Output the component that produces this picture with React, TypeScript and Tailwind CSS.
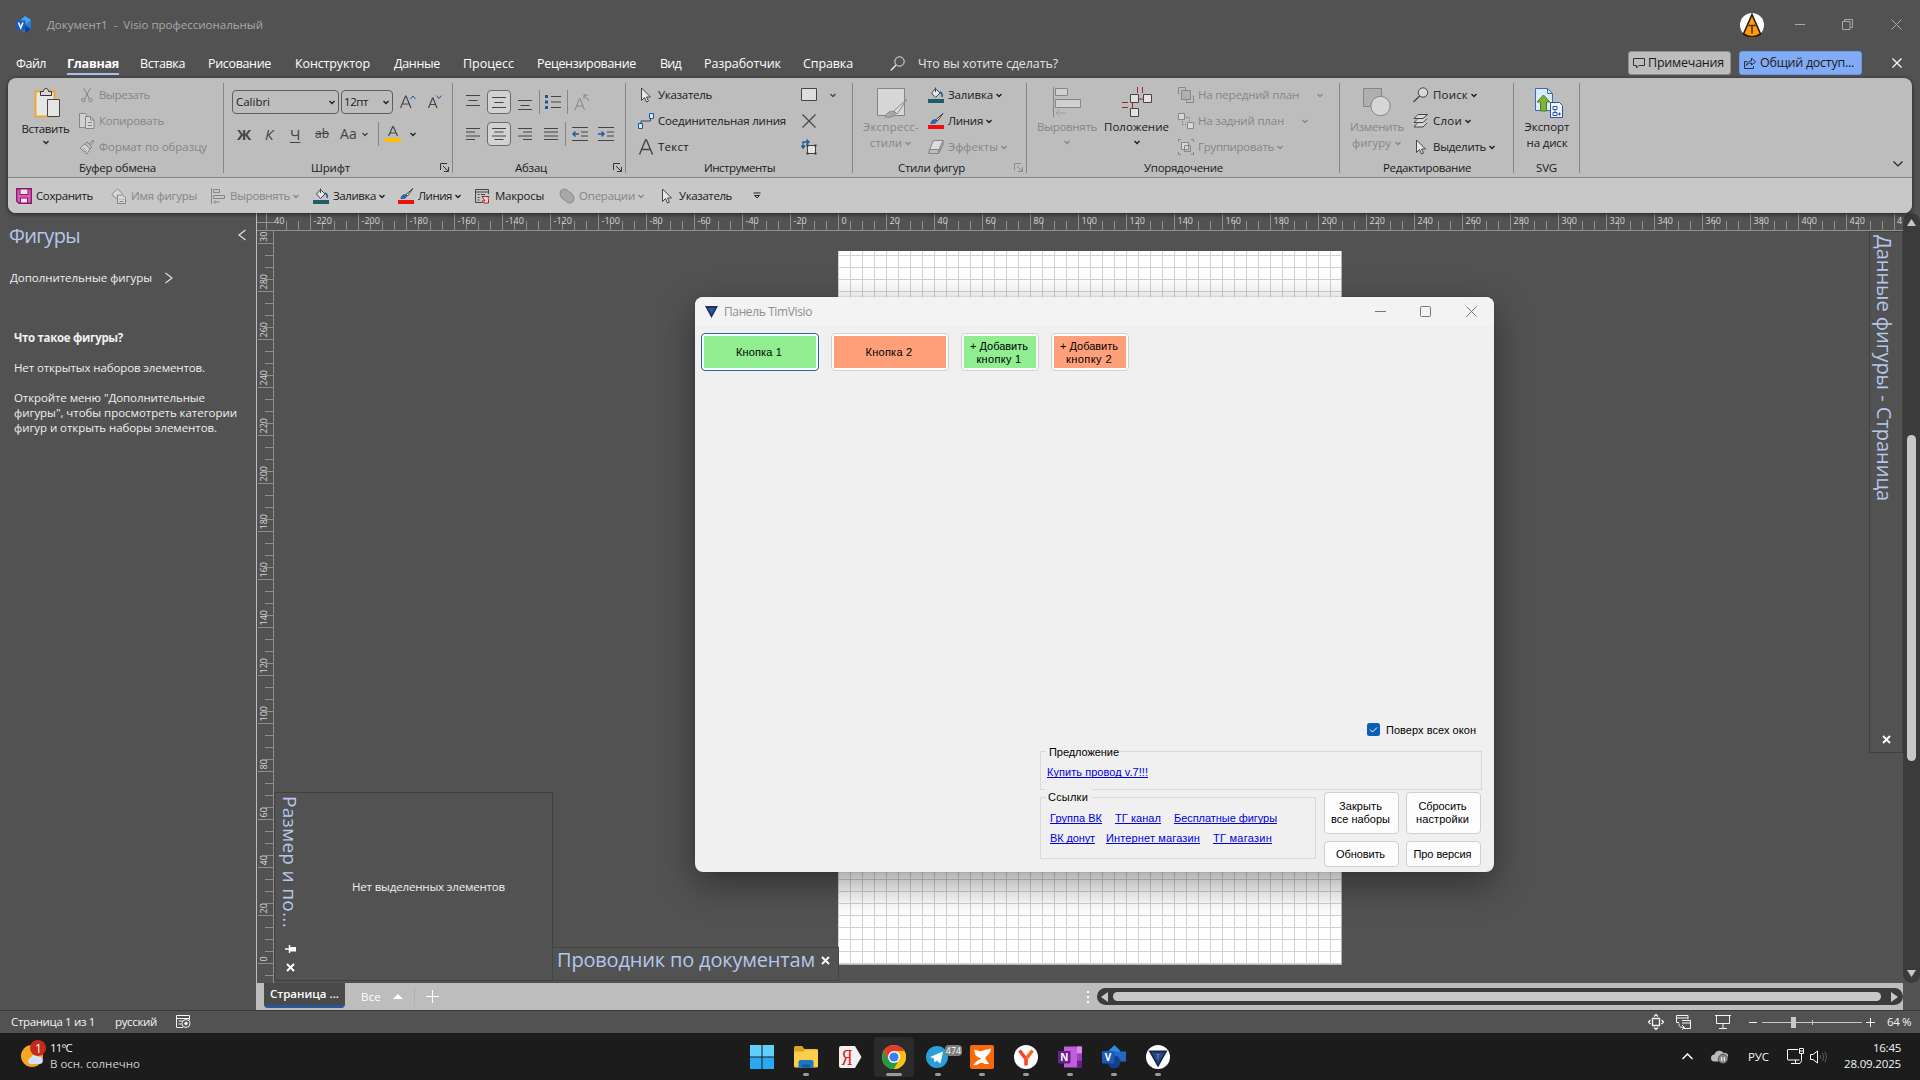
import { useLayoutEffect, useRef, useState } from "react";
import type { ReactNode } from "react";
import clsx from "clsx";

type FitProps = { children: string; w: number; vertical?: boolean; underline?: boolean; className?: string };

// Text run whose tracking is adjusted so it takes exactly `w` pixels
function Fit({ children, w, vertical, underline, className }: FitProps) {
  const ref = useRef<HTMLSpanElement>(null);
  const [tracking, setTracking] = useState(0);

  useLayoutEffect(() => {
    const el = ref.current;
    if (!el) return;
    const box = el.getBoundingClientRect();
    const natural = vertical ? box.height : box.width;
    setTracking((w - natural) / children.length);
  }, [children, w, vertical]);

  return (
    <span
      className={clsx("block shrink-0", className)}
      style={vertical ? { height: w } : { width: w }}
    >
      <span
        ref={ref}
        className={clsx(
          "inline-block whitespace-pre",
          vertical && "[writing-mode:vertical-rl]",
          underline && "underline underline-offset-1 [text-decoration-skip-ink:none]"
        )}
        style={{ letterSpacing: tracking }}
      >
        {children}
      </span>
    </span>
  );
}

function Chevron({ className }: { className?: string }) {
  return (
    <svg width="8" height="8" viewBox="0 0 8 8" className={clsx("shrink-0", className)}>
      <path d="M1.500 3 4 5.500 6.500 3" fill="none" stroke="currentColor" strokeWidth="1.300" />
    </svg>
  );
}

function Svg({ size = 16, children, className }: { size?: number; children: ReactNode; className?: string }) {
  return (
    <svg width={size} height={size} viewBox={`0 0 ${size} ${size}`} fill="none" stroke="currentColor" className={clsx("shrink-0", className)}>
      {children}
    </svg>
  );
}

/* ---------- small icons ---------- */

const CutIcon = () => (
  <Svg>
    <path d="M4.500 1 10.500 12M11.500 1 5.500 12" />
    <circle cx="4.500" cy="13" r="1.700" />
    <circle cx="11.500" cy="13" r="1.700" />
  </Svg>
);
const CopyIcon = () => (
  <Svg>
    <path d="M6.500 14.500H.5V.5h6l1 1v2" fill="#d0d0d0" />
    <path d="M6.500 3.500h5l3.500 3.500v8.500h-8.500z" fill="#d4d4d4" />
    <path d="M11.500 3.500v3.500H15M9 9.500h4M9 12.500h4" />
  </Svg>
);
const PainterIcon = () => (
  <Svg>
    <path d="m1 9 5-4 5 5-3 5z" fill="#d4d4d4" />
    <path d="m6 5 2-2 5 5-2 2M10 5l4-4 1 1-3.500 4.500M4 11l2-2M6 13l2-2" />
  </Svg>
);
const PointerIcon = () => (
  <Svg>
    <path d="M3.500 1v12.500l3-3 2 4.500 2-1-2-4h4z" fill="#e8e8e8" stroke="#444" />
  </Svg>
);
const ConnectorIcon = () => (
  <Svg>
    <path d="M3 10.500V8h9.500V5" stroke="#444" />
    <path d="M.5 10.500h4v5h-4zM11.500.500h4v5h-4z" fill="#d8e6f4" stroke="#1b5a96" />
  </Svg>
);
const TextIcon = () => (
  <Svg>
    <path d="M1.500 15.500 7.500 1h1l6 14.500M3.700 10.500h8.600" stroke="#444" strokeWidth="1.400" />
  </Svg>
);
const BucketIcon = ({ color = "#1f5e68" }: { color?: string }) => (
  <Svg>
    <path d="m3.500 6 4-4.500L12 6 7.500 10.500z" fill="#e6e6e6" stroke="#444" />
    <path d="M7.500 5V.5" stroke="#444" />
    <path d="M12 5c2 1 2.500 3 2 5" stroke="#1b5a96" strokeWidth="1.500" />
    <path d="M0 12h16v4H0z" fill={color} stroke="none" />
  </Svg>
);
const LineIcon = () => (
  <Svg>
    <path d="M15 .5 8 6.500l1.500 1.500z" fill="#e6e6e6" stroke="#444" />
    <path d="M3 10.500c0-3 3-4.500 5.500-3.500 1 2-1.500 4-5.500 3.500z" fill="#2a6cb0" stroke="#1b5a96" />
    <path d="M0 12h16v4H0z" fill="#ee0e0e" stroke="none" />
  </Svg>
);
const EffectsIcon = () => (
  <Svg>
    <path d="M5.500 1.500h9.500l-4 9H1.500z" fill="#dcdcdc" />
    <path d="M1.500 10.500 1 14.500h9.500L15 5.500v-4M11 10.500l-.5 4" strokeWidth="1.200" />
  </Svg>
);
const FrontIcon = () => (
  <Svg>
    <path d="M.5 7.500V.5h7v3M15.500 8.500v7h-7v-2" />
    <path d="M3.500 3.500h9v9h-9z" fill="#b0b0b0" />
  </Svg>
);
const BackIcon = () => (
  <Svg>
    <path d="M.5.5h6v6h-6zM9.500 9.500h6v6h-6z" fill="#d8d8d8" />
    <path d="M8 4.500h3.500V8M4.500 8v3.500H8" strokeDasharray="2 1" />
  </Svg>
);
const GroupIcon = () => (
  <Svg>
    <path d="M3.500 3.500h7v7h-7z" fill="#d8d8d8" />
    <path d="M6.500 6.500h6v6h-6zM.5 3V.5H3M13 .5h2.500V3M.5 13v2.500H3M13 15.500h2.500V13" />
  </Svg>
);
const FindIcon = () => (
  <Svg>
    <circle cx="10" cy="5.500" r="4.700" fill="#d8d8d8" stroke="#444" />
    <path d="m6.500 9-6 6" stroke="#444" strokeWidth="1.300" />
  </Svg>
);
const LayersIcon = () => (
  <Svg>
    <path d="M5 1.500h9.500L10 5.500H1zM4 6.500l-3 3h9l4-4M4 10.500l-3 3.500h9l4-4" fill="#d8d8d8" stroke="#444" />
  </Svg>
);
const AlignIcon = () => (
  <Svg>
    <path d="M1.500 0v16M3.500 1.500h6v3h-6zM3.500 7.500h11v3h-11zM3.500 14h6M5.500 12.500 4 14l1.500 1.500" />
  </Svg>
);
const SaveIcon = () => (
  <Svg>
    <path d="M.7.7h14.600v14.600H3L.7 13z" fill="#d65bb4" stroke="#8c1a6a" strokeWidth="1.400" />
    <path d="M4 1h8v5.500H4zM4.500 10h7v5h-7z" fill="#f2e4ee" stroke="#8c1a6a" />
  </Svg>
);
const ShapeNameIcon = () => (
  <Svg>
    <path d="M6 11 .8 6.500 6.500.8l5 5" fill="#d8d8d8" />
    <path d="M6.500 7h5l3 2.500v6h-8z" fill="#d8d8d8" />
    <path d="M8.500 11.500h1M11.500 11.500h1M8.500 13.500h4" />
  </Svg>
);
const MacroIcon = () => (
  <Svg>
    <path d="M13.500 6V1.500H.5v13h7M.5 4h13" stroke="#444" />
    <path d="M2.500 6.500h2M6 6.500h4M2.500 9.500h2M2.500 12h2" stroke="#444" />
    <path d="M7 8.500h7c-1 1-1 2-.5 3v3.500h-5l-1.500-2h3z" fill="#f2d8d8" stroke="#a3262e" />
  </Svg>
);
const OperationsIcon = () => (
  <Svg>
    <path d="M1 5.500a4.500 4.500 0 0 1 8.500-2c2 .5 5.500 3.500 5.500 7a4.500 4.500 0 0 1-8.500 2C4 11.500 1 9 1 5.500z" fill="#a8a8a8" />
  </Svg>
);

/* ---------- ribbon parts ---------- */

type ItemProps = { icon: ReactNode; label: string; w: number; off?: boolean; menu?: boolean; menuGap?: string; className?: string };

function Item({ icon, label, w, off, menu, menuGap = "ml-[2px]", className }: ItemProps) {
  return (
    <div className={clsx("flex h-[26px] items-center", off ? "text-[#868686]" : "text-[#1a1a1a]", className)}>
      {icon}
      <Fit w={w} className="ml-1">{label}</Fit>
      {menu && <Chevron className={menuGap} />}
    </div>
  );
}

function Launcher({ off }: { off?: boolean }) {
  return (
    <svg width="9" height="9" viewBox="0 0 9 9" fill="none" stroke={off ? "#8a8a8a" : "#333"} className="absolute right-[4px] bottom-[5px]">
      <path d="M.5 7V.5H7M3 3l5 5M8.500 4v4.500H4" />
    </svg>
  );
}

type GroupProps = { width: string; label: string; w: number; labelLeft: string; launcher?: "on" | "off"; children: ReactNode };

function Group({ width, label, w, labelLeft, launcher, children }: GroupProps) {
  return (
    <div className={clsx("relative flex h-[99px] shrink-0 flex-col pt-1", width)}>
      <div className="flex h-[77px]">{children}</div>
      <div className={clsx("flex h-[18px] items-center text-[#1a1a1a]", labelLeft)}>
        <Fit w={w}>{label}</Fit>
      </div>
      {launcher && <Launcher off={launcher === "off"} />}
      <span className="absolute top-[5px] right-0 h-[90px] w-px bg-[#868686]" />
    </div>
  );
}

function Lines({ d, active }: { d: string; active?: boolean }) {
  return (
    <span className={clsx("flex h-6 w-6 shrink-0 items-center justify-center rounded", active && "border border-[#6b6b6b] bg-[#d2d2d2]")}>
      <Svg className="text-[#444]">
        <path d={d} />
      </Svg>
    </span>
  );
}

const VSep = ({ className }: { className?: string }) => <span className={clsx("h-6 w-px shrink-0 bg-[#868686]", className)} />;

function ClipboardGroup() {
  return (
    <Group width="w-[216px]" label="Буфер обмена" w={77} labelLeft="pl-[71px]">
      <div className="flex w-[62px] shrink-0 flex-col items-center pl-[13px] pt-[5px]">
        <Svg size={32} className="ml-[4px]">
          <path d="M3.500 4.500h19v25h-19z" fill="#e6e6e6" stroke="#f0a92b" strokeWidth="2" />
          <path d="M8.500 8.500V4.500h3c0-4 5-4 5 0h3v4z" fill="#d8d8d8" stroke="#333" />
          <path d="M15.500 12.500h12v17h-12z" fill="#e4e4e4" stroke="#444" />
        </Svg>
        <Fit w={48} className="mt-px text-[#1a1a1a]">Вставить</Fit>
        <Chevron className="mt-px text-[#222]" />
      </div>
      <div className="ml-[9px]">
        <Item icon={<CutIcon />} label="Вырезать" w={51} off />
        <Item icon={<CopyIcon />} label="Копировать" w={65} off />
        <Item icon={<PainterIcon />} label="Формат по образцу" w={108} off />
      </div>
    </Group>
  );
}

function FontGroup() {
  return (
    <Group width="w-[229px]" label="Шрифт" w={39} labelLeft="pl-[87px]" launcher="on">
      <div className="pl-2 pt-2 text-[#444]">
        <div className="flex items-center">
          <div className="flex h-6 w-[107px] items-center rounded border border-[#5e5e5e] pr-[2px] pl-[3px] text-[#1a1a1a]">
            <Fit w={34} className="mr-auto">Calibri</Fit>
            <Chevron />
          </div>
          <div className="ml-[2px] flex h-6 w-[52px] items-center rounded border border-[#5e5e5e] pr-[2px] pl-[2px] text-[#1a1a1a]">
            <Fit w={24} className="mr-auto">12пт</Fit>
            <Chevron />
          </div>
          <Svg className="ml-[7px]">
            <path d="M.5 14 5.500 2h.5l5 12M2.200 10h7.500" strokeWidth="1.200" />
            <path d="m10.500 5 2.500-3 2.500 3" stroke="#1b5a96" />
          </Svg>
          <Svg className="ml-[11px]">
            <path d="m1.500 14 4-10h.5l4 10M3 10.500h6" strokeWidth="1.200" />
            <path d="m9.500 1.500 2.500 3 2.500-3" stroke="#1b5a96" />
          </Svg>
        </div>
        <div className="mt-[8px] flex h-6 items-center text-[15px] leading-none">
          <span className="ml-[5px] w-[28px] font-bold">Ж</span>
          <span className="w-[25px] italic">К</span>
          <span className="w-[25px] underline underline-offset-2">Ч</span>
          <span className="w-[25px] text-[12px] line-through">ab</span>
          <Fit w={17} className="text-[14px]">Aa</Fit>
          <Chevron className="ml-[4px]" />
          <VSep className="ml-[9px]" />
          <Svg className="ml-[6px]">
            <path d="m3.500 10 4.300-9.500h.4l4.300 9.500M5 7h6" strokeWidth="1.200" />
            <path d="M0 12h16v4H0z" fill="#ffc000" stroke="none" />
          </Svg>
          <Chevron className="ml-2 text-[#222]" />
        </div>
      </div>
    </Group>
  );
}

function ParagraphGroup() {
  return (
    <Group width="w-[173px]" label="Абзац" w={32} labelLeft="pl-[62px]" launcher="on">
      <div className="pl-2 pt-2">
        <div className="flex items-center gap-[2px]">
          <Lines d="M1 1.500h14M3.500 6.500h9M1 11.500h14" />
          <Lines active d="M1 3.500h14M3.500 8.500h9M1 13.500h14" />
          <Lines d="M1 6.500h14M3.500 11.500h9M1 15.500h14" />
          <VSep />
          <Svg className="ml-[3px] text-[#444]">
            <path d="M6 2.500h10M6 8h10M6 13.500h10" />
            <path d="M0 1h3v3H0zM0 6.500h3v3H0zM0 12h3v3H0z" fill="#1b5a96" stroke="none" />
          </Svg>
          <VSep className="ml-[4px]" />
          <Svg className="ml-[4px] text-[#868686]">
            <path d="m1 16 4.500-11.500H6L10.500 16M2.500 12h6.500M15 7 10 1M10 5V1h4" />
          </Svg>
        </div>
        <div className="mt-[8px] flex items-center gap-[2px]">
          <Lines d="M1 2.500h14M1 6h9M1 10h14M1 13.500h9" />
          <Lines active d="M1 2.500h14M3.500 6h9M1 10h14M3.500 13.500h9" />
          <Lines d="M1 2.500h14M6 6h9M1 10h14M6 13.500h9" />
          <Lines d="M1 2.500h14M1 6h14M1 10h14M1 13.500h14" />
          <VSep />
          <Svg className="ml-[4px] text-[#444]">
            <path d="M0 1.500h16M9 6h7M9 10h7M0 14.500h16" />
            <path d="M7 8H1M3.500 5.500 1 8l2.500 2.500" stroke="#1b5a96" strokeWidth="1.400" />
          </Svg>
          <Svg className="ml-[8px] text-[#444]">
            <path d="M0 1.500h16M9 6h7M9 10h7M0 14.500h16" />
            <path d="M0 8h6M3.500 5.500 6 8l-2.500 2.500" stroke="#1b5a96" strokeWidth="1.400" />
          </Svg>
        </div>
      </div>
    </Group>
  );
}

function ToolsGroup() {
  return (
    <Group width="w-[227px]" label="Инструменты" w={71} labelLeft="pl-[78px]">
      <div className="w-[164px] pl-[12px]">
        <Item icon={<PointerIcon />} label="Указатель" w={54} />
        <Item icon={<ConnectorIcon />} label="Соединительная линия" w={128} />
        <Item icon={<TextIcon />} label="Текст" w={31} />
      </div>
      <div className="ml-[11px] text-[#444]">
        <div className="flex h-[26px] items-center">
          <Svg>
            <path d="M.5 1.500h15v12H.5z" fill="#dedede" />
          </Svg>
          <Chevron className="ml-[12px]" />
        </div>
        <div className="flex h-[26px] items-center">
          <Svg>
            <path d="M1.500 1.500 14.500 14.500M14.500 1.500 1.500 14.500" strokeWidth="1.200" />
          </Svg>
        </div>
        <div className="flex h-[26px] items-center">
          <Svg>
            <path d="M6.500 6.500h8v8h-8z" fill="#e2e2e2" />
            <path d="M5.500 5.500h2v2h-2zM13.500 5.500h2v2h-2zM5.500 13.500h2v2h-2zM13.500 13.500h2v2h-2z" fill="#333" stroke="none" />
            <path d="M2 9V3h6M5.500.500 8 3 5.500 5.500M.500 6.500 2 9l2-2.500" stroke="#1b5a96" strokeWidth="1.300" />
          </Svg>
        </div>
      </div>
    </Group>
  );
}

function StylesGroup() {
  return (
    <Group width="w-[174px]" label="Стили фигур" w={67} labelLeft="pl-[45px]" launcher="off">
      <div className="w-[75px] shrink-0 pl-[10px] pt-[5px] text-[#868686]">
        <Svg size={32} className="ml-[13px]">
          <path d="M1.500 1.500h27v27h-27z" fill="#d6d6d6" />
          <path d="M31 12 18 24l3 3z" fill="#e0e0e0" />
          <path d="M9 30c2-5 6-7 10-5 1 4-4 6-10 5z" fill="#a8a8a8" />
        </Svg>
        <Fit w={56} className="leading-4">Экспресс-</Fit>
        <div className="flex items-center pl-[7px] leading-4">
          <Fit w={32}>стили</Fit>
          <Chevron className="ml-[2px]" />
        </div>
      </div>
      <div>
        <Item icon={<BucketIcon />} label="Заливка" w={45} menu />
        <Item icon={<LineIcon />} label="Линия" w={35} menu />
        <Item icon={<EffectsIcon />} label="Эффекты" w={50} menu off />
      </div>
    </Group>
  );
}

function ArrangeGroup() {
  return (
    <Group width="w-[313px]" label="Упорядочение" w={79} labelLeft="pl-[117px]">
      <div className="flex w-[80px] shrink-0 flex-col items-center pt-[5px] text-[#868686]">
        <Svg size={32}>
          <path d="M2.500 0v30M4.500 1.500h12v7h-12zM4.500 12.500h25v8h-25z" fill="#d0d0d0" />
          <path d="M5 26h10M9 22.500 5 26l4 3.500" stroke="#a0a0a0" />
        </Svg>
        <Fit w={60} className="leading-4">Выровнять</Fit>
        <Chevron className="mt-[3px]" />
      </div>
      <div className="flex w-[59px] shrink-0 flex-col items-center pt-[5px] text-[#1a1a1a]">
        <Svg size={32} className="ml-[2px]">
          <path d="M15.500 0v6M20.500 0v6M15 12h6M0 15.500h6M0 20.500h6M10.500 15v6" stroke="#a3262e" />
          <path d="M8.500 7.500h8v8h-8zM21.500 7.500h8v8h-8zM8.500 21.500h8v8h-8z" fill="#e2e2e2" stroke="#444" />
        </Svg>
        <Fit w={65} className="leading-4">Положение</Fit>
        <Chevron className="mt-[3px]" />
      </div>
      <div className="ml-[12px]">
        <Item icon={<FrontIcon />} label="На передний план" w={101} off menu menuGap="ml-[17px]" />
        <Item icon={<BackIcon />} label="На задний план" w={86} off menu menuGap="ml-[17px]" />
        <Item icon={<GroupIcon />} label="Группировать" w={76} off menu />
      </div>
    </Group>
  );
}

function EditGroup() {
  return (
    <Group width="w-[174px]" label="Редактирование" w={88} labelLeft="pl-[43px]">
      <div className="w-[73px] shrink-0 pl-[10px] pt-[5px] text-[#868686]">
        <Svg size={32} className="ml-[12px]">
          <path d="M1.500 1.500h18v18h-18z" fill="#b0b0b0" />
          <circle cx="18.500" cy="19" r="9.700" fill="#d6d6d6" />
        </Svg>
        <Fit w={54} className="leading-4">Изменить</Fit>
        <div className="flex items-center pl-[2px] leading-4">
          <Fit w={39}>фигуру</Fit>
          <Chevron className="ml-[3px]" />
        </div>
      </div>
      <div>
        <Item icon={<FindIcon />} label="Поиск" w={35} menu />
        <Item icon={<LayersIcon />} label="Слои" w={29} menu />
        <Item icon={<PointerIcon />} label="Выделить" w={53} menu />
      </div>
    </Group>
  );
}

function ExportGroup() {
  return (
    <Group width="w-[66px]" label="SVG" w={21} labelLeft="pl-[22px]">
      <div className="flex w-full flex-col items-center pt-[5px] text-[#1a1a1a]">
        <Svg size={32} className="ml-[3px]">
          <path d="M2.500 1.500h12l5 5v17h-17z" fill="#dcebfb" stroke="#3a6ea8" />
          <path d="M14.500 1.500v5h5" stroke="#3a6ea8" />
          <path d="m10.500 8 6.500 7h-3.500v9h-6v-9H4z" fill="#7ab53a" stroke="#4f7d22" />
          <path d="M17.500 15.500h9l3 3v12h-12z" fill="#eef5fd" stroke="#2b579a" />
          <path d="M20 19.500h4v3h-4zM20 25.500h4v3h-4zM22 22.500v3M25 27h3M26.500 25.500v3" stroke="#2b579a" />
        </Svg>
        <Fit w={45} className="leading-4">Экспорт</Fit>
        <Fit w={41} className="leading-4">на диск</Fit>
      </div>
    </Group>
  );
}

function QuickBar() {
  return (
    <div className="flex h-[35px] items-center bg-[#c8c8c8] pl-2">
      <Item icon={<SaveIcon />} label="Сохранить" w={57} />
      <Item icon={<ShapeNameIcon />} label="Имя фигуры" w={66} off className="ml-[18px]" />
      <Item icon={<AlignIcon />} label="Выровнять" w={60} off menu className="ml-[13px]" />
      <Item icon={<BucketIcon />} label="Заливка" w={43} menu className="ml-[13px]" />
      <Item icon={<LineIcon />} label="Линия" w={34} menu className="ml-[12px]" />
      <Item icon={<MacroIcon />} label="Макросы" w={49} className="ml-[13px]" />
      <Item icon={<OperationsIcon />} label="Операции" w={56} off menu className="ml-[15px]" />
      <Item icon={<PointerIcon />} label="Указатель" w={53} className="ml-[14px]" />
      <svg width="8" height="8" viewBox="0 0 8 8" fill="none" stroke="#222" className="ml-[21px]">
        <path d="M.5 1h7M1.500 3.500h5L4 6z" />
      </svg>
    </div>
  );
}

const TABS: { label: string; w: number; ml: string }[] = [
  { label: "Файл", w: 30, ml: "ml-4" },
  { label: "Главная", w: 52, ml: "ml-[21px]" },
  { label: "Вставка", w: 45, ml: "ml-[21px]" },
  { label: "Рисование", w: 63, ml: "ml-[23px]" },
  { label: "Конструктор", w: 75, ml: "ml-[24px]" },
  { label: "Данные", w: 46, ml: "ml-[24px]" },
  { label: "Процесс", w: 51, ml: "ml-[23px]" },
  { label: "Рецензирование", w: 99, ml: "ml-[23px]" },
  { label: "Вид", w: 21, ml: "ml-[24px]" },
  { label: "Разработчик", w: 77, ml: "ml-[23px]" },
  { label: "Справка", w: 50, ml: "ml-[22px]" },
];

function TitleBar() {
  return (
    <header className="flex h-12 items-center pt-px pl-4 text-[#a9a9a9]">
      <svg width="16" height="18" viewBox="0 0 16 18">
        <path d="M9 0l6 4v9l-6 4-5-4V4z" fill="#2b7cd3" />
        <path d="M9 0l6 4-6 5-4-5z" fill="#41a5ee" />
        <path d="M9 9l6 4-6 4.500z" fill="#103f91" />
        <rect y="4.500" width="9.500" height="9.500" rx="1" fill="#185abd" />
        <path d="m2.500 6.500 2.200 5.500L7 6.500" fill="none" stroke="#fff" strokeWidth="1.500" />
      </svg>
      <Fit w={216} className="ml-[15px]">{"Документ1  -  Visio профессиональный"}</Fit>
      <svg width="24" height="24" viewBox="0 0 24 24" className="ml-auto">
        <circle cx="12" cy="12" r="12" fill="#fff" />
        <path d="M12 1.500 20.500 21Q12 26.500 3.500 21z" fill="#ff9a0a" stroke="#2a1c00" strokeWidth="1.600" />
        <path d="M8.500 12.500h7M12 12.500v8" stroke="#4a3000" strokeWidth="1.500" />
      </svg>
      <svg width="10" height="10" viewBox="0 0 10 10" stroke="currentColor" className="ml-[31px]">
        <path d="M0 4.500h10" />
      </svg>
      <svg width="11" height="11" viewBox="0 0 11 11" fill="none" stroke="currentColor" className="ml-[37px]">
        <path d="M.5 2.500h7.500v8H.5zM2.500 2V.5h8v8H8.500" />
      </svg>
      <svg width="11" height="11" viewBox="0 0 11 11" stroke="currentColor" className="mr-[18px] ml-[38px]">
        <path d="m.5.5 10 10M10.500.5l-10 10" />
      </svg>
    </header>
  );
}

function TabRow() {
  return (
    <nav className="flex h-[30px] items-center text-[12.5px] text-white">
      {TABS.map((tab) => (
        <div key={tab.label} className={clsx("flex h-[30px] items-center pt-[2px]", tab.ml, tab.label === "Главная" && "relative font-bold")}>
          <Fit w={tab.w}>{tab.label}</Fit>
          {tab.label === "Главная" && <span className="absolute bottom-[3px] left-0 h-[2px] w-full bg-[#a8c0ee]" />}
        </div>
      ))}
      <svg width="15" height="15" viewBox="0 0 15 15" fill="none" stroke="#e8e8e8" className="ml-[37px]">
        <circle cx="9.500" cy="5.500" r="4.700" />
        <path d="M6 9 .8 14.500" strokeWidth="1.300" />
      </svg>
      <Fit w={140} className="mt-[2px] ml-[13px] text-[#e4e4e4]">Что вы хотите сделать?</Fit>
      <button className="ml-auto flex h-6 w-[103px] items-center rounded-[3px] border border-[#8d8d8d] bg-[#bdbdbd] pl-[4px] text-[#1a1a1a]">
        <svg width="12" height="12" viewBox="0 0 12 12" fill="none" stroke="#333">
          <path d="M.5 1.500h11v7H6L3.500 11V8.500h-3z" />
        </svg>
        <Fit w={76} className="mt-px ml-[3px]">Примечания</Fit>
      </button>
      <button className="ml-2 flex h-6 w-[123px] items-center rounded-[3px] border border-[#6b97e8] bg-[#82abf5] pl-[4px] text-[#1a1a1a]">
        <svg width="12" height="12" viewBox="0 0 12 12" fill="none" stroke="#22304d">
          <path d="M3 4.500H.5v7h9V9M2.500 8.500C3 5 5 4 7.500 4V1L11.500 5 7.500 8V6C5 6 3.500 7 2.500 8.500z" />
        </svg>
        <Fit w={94} className="mt-px ml-[4px]">Общий доступ...</Fit>
      </button>
      <svg width="10" height="10" viewBox="0 0 10 10" stroke="#fff" className="mr-[18px] ml-[30px]">
        <path d="m.5.5 9 9M9.500.5l-9 9" strokeWidth="1.200" />
      </svg>
    </nav>
  );
}

function Ribbon() {
  return (
    <section className="relative z-10 mx-2 h-[135px] overflow-hidden rounded-lg bg-[#bdbdbd] shadow-[0_1px_4px_rgba(0,0,0,0.6)]">
      <div className="flex border-b border-[#868686]">
        <ClipboardGroup />
        <FontGroup />
        <ParagraphGroup />
        <ToolsGroup />
        <StylesGroup />
        <ArrangeGroup />
        <EditGroup />
        <ExportGroup />
        <svg width="10" height="6" viewBox="0 0 10 6" fill="none" stroke="#222" className="mt-auto mr-[9px] mb-[10px] ml-auto">
          <path d="m.5.5 4.500 4.500L9.500.5" strokeWidth="1.200" />
        </svg>
      </div>
      <QuickBar />
    </section>
  );
}

/* ---------- drawing area ---------- */

// 12px per 5 mm step; zero sits where the page starts
const STEP = 12;

function TopRuler() {
  const zero = 581.5;
  const ticks = Array.from({ length: 138 }, (_, i) => i - 48);
  return (
    <svg width="1646" height="18" className="block shrink-0">
      <g stroke="#8f8f8f">
        <path d="M0 17.500h1646" />
        {ticks.map((i) => {
          const x = zero + i * STEP;
          if (x < 18) return null;
          return <path key={i} d={`M${x} ${i % 4 === 0 ? 1 : 8}V17`} />;
        })}
        <path d="M9.500 0v17M0 9.500h17" />
      </g>
      <g fill="#d6d6d6" className="font-['Open_Sans'] text-[9px]">
        {ticks
          .filter((i) => i % 4 === 0 && i > -48 && i < 88)
          .map((i) => (
            <text key={i} x={zero + i * STEP + 3} y="11">
              {i * 5}
            </text>
          ))}
        <text x="17" y="11">40</text>
        <text x="1640" y="11">4</text>
      </g>
    </svg>
  );
}

function LeftRuler() {
  const zero = 732.5;
  const ticks = Array.from({ length: 62 }, (_, i) => i - 1);
  return (
    <svg width="17" height="752" className="block shrink-0">
      <g stroke="#8f8f8f">
        <path d="M16.500 0v752" />
        {ticks.map((i) => {
          const y = zero - i * STEP;
          return <path key={i} d={`M${i % 4 === 0 ? 1 : 8} ${y}H16`} />;
        })}
      </g>
      <g fill="#d6d6d6" className="font-['Open_Sans'] text-[9px]">
        {ticks
          .filter((i) => i % 4 === 0 && i < 60)
          .map((i) => (
            <text key={i} transform={`translate(10 ${zero - i * STEP - 2}) rotate(-90)`}>
              {i * 5}
            </text>
          ))}
        <text transform="translate(10 11) rotate(-90)">30</text>
      </g>
    </svg>
  );
}

function Page() {
  return (
    <svg width="504" height="714" className="absolute top-[20px] left-[564px] bg-white">
      <defs>
        <pattern id="grid" width="12" height="12" patternUnits="userSpaceOnUse" y="4">
          <path d="M.5 0v12M0 .5h12" stroke="#d2d2d2" fill="none" />
        </pattern>
      </defs>
      <rect width="504" height="714" fill="url(#grid)" />
      <path d="M503.500 0v714M0 713.500h504" stroke="#b5b5b5" />
    </svg>
  );
}

const CloseX = ({ className }: { className?: string }) => (
  <svg width="9" height="9" viewBox="0 0 9 9" className={className}>
    <path d="m1 1 7 7M8 1 1 8" stroke="#fff" strokeWidth="2" />
  </svg>
);

function ShapesPanel() {
  return (
    <aside className="w-64 shrink-0 text-[#f0f0f0]">
      <div className="flex items-center justify-between pt-[9px] pr-[10px] pl-[9px]">
        <Fit w={71} className="text-[20px] leading-7 text-[#b4c7ec]">Фигуры</Fit>
        <svg width="8" height="12" viewBox="0 0 8 12" fill="none" stroke="#e0e0e0" className="-mt-[2px]">
          <path d="M7.500 1 1 6l6.500 5" strokeWidth="1.200" />
        </svg>
      </div>
      <div className="mt-[19px] flex items-center pl-[10px] leading-[18px]">
        <Fit w={142}>Дополнительные фигуры</Fit>
        <svg width="8" height="12" viewBox="0 0 8 12" fill="none" stroke="#e0e0e0" className="ml-[13px]">
          <path d="M.5 1 7 6 .5 11" strokeWidth="1.200" />
        </svg>
      </div>
      <div className="mt-[43px] pl-[14px] text-[11.5px] leading-[15px]">
        <Fit w={109} className="font-bold">Что такое фигуры?</Fit>
        <Fit w={191} className="mt-[15px]">Нет открытых наборов элементов.</Fit>
        <Fit w={191} className="mt-[15px]">Откройте меню "Дополнительные</Fit>
        <Fit w={223}>фигуры", чтобы просмотреть категории</Fit>
        <Fit w={203}>фигур и открыть наборы элементов.</Fit>
      </div>
    </aside>
  );
}

function SizePanel() {
  return (
    <div className="absolute bottom-[2px] left-0 flex h-[189px] w-[279px] border border-[#3f3f3f] bg-[#525252]">
      <div className="flex w-[30px] flex-col items-center pt-[3px] pb-[8px] text-[19px] leading-6 text-[#b4c7ec]">
        <Fit vertical w={132} className="-ml-px">Размер и по...</Fit>
        <svg width="11" height="10" viewBox="0 0 11 10" className="mt-auto">
          <path d="M0 5h5M4.500 1v8" stroke="#fff" strokeWidth="1.500" />
          <path d="M5 3h6v4.500H5z" fill="#fff" />
        </svg>
        <CloseX className="mt-[9px] ml-px" />
      </div>
      <div className="flex grow items-center pl-[47px] text-[#f0f0f0]">
        <Fit w={153}>Нет выделенных элементов</Fit>
      </div>
    </div>
  );
}

function ExplorerPanel() {
  return (
    <div className="absolute bottom-[2px] left-[278px] flex h-[34px] w-[287px] items-center border border-[#454545] bg-[#525252] pb-[8px] pl-[4px] text-[20px] text-[#b4c7ec]">
      <Fit w={258}>Проводник по документам</Fit>
      <CloseX className="ml-[6px]" />
    </div>
  );
}

function ShapeDataPanel() {
  return (
    <div className="absolute top-0 right-0 flex h-[522px] w-[34px] flex-col items-center border border-[#404040] pt-[3px] pr-[4px] pb-[8px] text-[20px] leading-6 text-[#b4c7ec]">
      <Fit vertical w={266}>Данные фигуры - Страница</Fit>
      <CloseX className="mt-auto ml-[4px]" />
    </div>
  );
}

function SheetTabs() {
  return (
    <div className="flex h-[27px] items-start bg-[#bdbdbd] pl-[7px] text-white">
      <div className="flex h-[25px] w-[81px] items-center rounded-b border-b-[3px] border-[#2b579a] bg-[#4a4a4a] pl-[6px] font-semibold">
        <Fit w={69}>Страница ...</Fit>
      </div>
      <div className="flex h-[27px] items-center">
        <Fit w={20} className="ml-4">Все</Fit>
        <svg width="10" height="5" viewBox="0 0 10 5" className="ml-[12px]">
          <path d="M5 0l5 5H0z" fill="#fff" />
        </svg>
        <span className="ml-[11px] h-5 w-px bg-[#b0b0b0]" />
        <svg width="13" height="13" viewBox="0 0 13 13" stroke="#fff" className="ml-[11px]">
          <path d="M6.500 0v13M0 6.500h13" />
        </svg>
      </div>
      <div className="ml-auto flex h-[27px] items-center">
        <span className="mr-[8px] flex flex-col gap-[3px]">
          <i className="block h-[2px] w-[2px] bg-white" />
          <i className="block h-[2px] w-[2px] bg-white" />
          <i className="block h-[2px] w-[2px] bg-white" />
        </span>
        <div className="flex h-[17px] w-[806px] items-center rounded-full bg-[#3b3b3b] pl-[4px]">
          <svg width="7" height="10" viewBox="0 0 7 10">
            <path d="M7 0v10L0 5z" fill="#c8c8c8" />
          </svg>
          <span className="ml-[5px] h-[9px] w-[768px] rounded-full bg-[#c8c8c8]" />
          <svg width="7" height="10" viewBox="0 0 7 10" className="ml-[10px]">
            <path d="M0 0v10l7-5z" fill="#c8c8c8" />
          </svg>
        </div>
      </div>
    </div>
  );
}

function VerticalScroll() {
  return (
    <div className="flex h-[770px] w-[17px] shrink-0 flex-col items-center rounded-full bg-[#3b3b3b] pt-[6px] pb-[6px]">
      <svg width="9" height="7" viewBox="0 0 9 7">
        <path d="M4.500 0 9 7H0z" fill="#c8c8c8" />
      </svg>
      <span className="mt-[209px] h-[326px] w-[9px] rounded-full bg-[#c8c8c8]" />
      <svg width="9" height="7" viewBox="0 0 9 7" className="mt-auto">
        <path d="M4.500 7 9 0H0z" fill="#c8c8c8" />
      </svg>
    </div>
  );
}

function StatusBar() {
  return (
    <footer className="flex h-[23px] items-center border-t border-[#383838] bg-[#525252] text-[#f4f4f4]">
      <Fit w={84} className="ml-[11px]">Страница 1 из 1</Fit>
      <Fit w={42} className="ml-[20px]">русский</Fit>
      <Svg className="ml-[19px]">
        <path d="M7 13.500H.5v-12h13V6M.5 4.500h13M2.500 7h4M2.500 10h3" />
        <circle cx="10" cy="9.500" r="4" />
        <circle cx="10" cy="9.500" r="1.300" fill="currentColor" />
      </Svg>
      <Svg className="ml-auto">
        <path d="M4.500 4.500h7v7h-7zM6 2.500 8 .5l2 2M6 13.500l2 2 2-2M2.500 6 .5 8l2 2M13.500 6l2 2-2 2" strokeWidth="1.300" />
      </Svg>
      <Svg className="ml-[12px]">
        <path d="M12 5V1.500H.5v7H3M.5 4H12M6 6.500h8.500v8H8M6 9h8M3 9.500c0 3 1 4 5 4M6 11l2.500 2.500L6 15.500" />
      </Svg>
      <Svg className="ml-[23px]">
        <path d="M0 1.500h16M1.500 1.500v8h13v-8M8 9.500v5M4 14.500h8" />
      </Svg>
      <svg width="8" height="9" viewBox="0 0 8 9" stroke="currentColor" className="ml-[18px]">
        <path d="M0 4.500h8" />
      </svg>
      <svg width="100" height="13" viewBox="0 0 100 13" className="ml-[5px]">
        <path d="M0 6.500h100M50.500 4v5" stroke="#c8c8c8" />
        <rect x="29" y="1" width="5" height="11" fill="#c8c8c8" />
      </svg>
      <svg width="9" height="9" viewBox="0 0 9 9" stroke="currentColor" className="ml-[4px]">
        <path d="M0 4.500h9M4.500 0v9" />
      </svg>
      <Fit w={24} className="mr-[9px] ml-[12px]">64 %</Fit>
    </footer>
  );
}

/* ---------- floating window ---------- */

type WinButtonProps = { className: string; lines: [string, number][] };

const WinButton = ({ className, lines }: WinButtonProps) => (
  <button className={clsx("flex shrink-0 flex-col items-center justify-center rounded border border-[#cfcfcf] bg-[#fdfdfd] pr-[2px] leading-[13px]", className)}>
    {lines.map(([text, w]) => (
      <Fit key={text} w={w}>{text}</Fit>
    ))}
  </button>
);

type PadProps = { className: string; fill: string; lines: [string, number][] };

const Pad = ({ className, fill, lines }: PadProps) => (
  <button className={clsx("h-[38px] shrink-0 rounded border bg-white p-[2px] leading-[13px]", className)}>
    <span className={clsx("flex h-full flex-col items-center justify-center pt-px pr-[2px]", fill)}>
      {lines.map(([text, w]) => (
        <Fit key={text} w={w}>{text}</Fit>
      ))}
    </span>
  </button>
);

const Link = ({ children, w, className }: { children: string; w: number; className?: string }) => (
  <Fit w={w} underline className={clsx("text-[#0000e0]", className)}>{children}</Fit>
);

function TimVisioWindow() {
  return (
    <div className="absolute top-[297px] left-[695px] z-20 flex h-[575px] w-[799px] flex-col rounded-lg bg-[#f0f0f0] font-['Liberation_Sans',sans-serif] text-[11px] text-black shadow-[0_12px_36px_rgba(0,0,0,0.4),0_0_1px_rgba(0,0,0,0.6)]">
      <div className="flex h-[29px] items-center rounded-t-lg bg-[#f3f3f3] pl-[10px]">
        <svg width="13" height="12" viewBox="0 0 13 12">
          <path d="M0 0h13L6.500 12z" fill="#1a3263" />
          <path d="M3 2h7L6.500 8.500z" fill="#2c5698" />
        </svg>
        <Fit w={88} className="ml-[6px] font-['Open_Sans',sans-serif] text-[12px] text-[#8d8d8d]">Панель TimVisio</Fit>
        <svg width="11" height="11" viewBox="0 0 11 11" fill="none" stroke="#777" className="ml-auto">
          <path d="M0 5.500h11" />
        </svg>
        <svg width="11" height="11" viewBox="0 0 11 11" fill="none" stroke="#777" className="ml-[34px]">
          <rect x=".5" y=".5" width="10" height="10" rx="1" />
        </svg>
        <svg width="11" height="11" viewBox="0 0 11 11" fill="none" stroke="#777" className="mr-[17px] ml-[35px]">
          <path d="m.5.5 10 10M10.500.5l-10 10" />
        </svg>
      </div>
      <div className="flex pt-[7px] pl-[6px]">
        <Pad className="w-[118px] border-[#1668b0]" fill="bg-[#90ee90]" lines={[["Кнопка 1", 46]]} />
        <Pad className="ml-3 w-[118px] border-[#cfcfcf]" fill="bg-[#ffa07a]" lines={[["Кнопка 2", 47]]} />
        <Pad className="ml-3 w-[78px] border-[#cfcfcf]" fill="bg-[#90ee90]" lines={[["+ Добавить", 58], ["кнопку 1", 45]]} />
        <Pad className="ml-3 w-[78px] border-[#cfcfcf]" fill="bg-[#ffa07a]" lines={[["+ Добавить", 58], ["кнопку 2", 46]]} />
      </div>
      <div className="mt-auto mr-[12px] mb-[5px] ml-auto w-[442px]">
        <div className="flex items-center justify-end pr-[6px]">
          <svg width="13" height="13" viewBox="0 0 13 13">
            <rect width="13" height="13" rx="2.500" fill="#0a5fb4" />
            <path d="m3 6.500 2.500 2.500L10 4.500" fill="none" stroke="#fff" />
          </svg>
          <Fit w={90} className="ml-[6px]">Поверх всех окон</Fit>
        </div>
        <div className="relative mt-[13px] h-[39px] border border-[#dadada]">
          <Fit w={70} className="absolute -top-[8px] left-[5px] box-content bg-[#f0f0f0] pl-[3px]">Предложение</Fit>
          <Link w={101} className="mt-[12px] ml-[6px]">Купить провод v.7!!!</Link>
        </div>
        <div className="mt-[2px] flex">
          <div className="relative mt-[5px] h-[62px] w-[276px] shrink-0 border border-[#dadada]">
            <Fit w={40} className="absolute -top-[9px] left-[5px] box-content bg-[#f0f0f0] pr-1 pl-[2px]">Ссылки</Fit>
            <div className="mt-[12px] flex pl-[9px]">
              <Link w={52}>Группа ВК</Link>
              <Link w={46} className="ml-[13px]">ТГ канал</Link>
              <Link w={103} className="ml-[13px]">Бесплатные фигуры</Link>
            </div>
            <div className="mt-[3px] flex pl-[9px]">
              <Link w={45}>ВК донут</Link>
              <Link w={94} className="ml-[11px]">Интернет магазин</Link>
              <Link w={59} className="ml-[13px]">ТГ магазин</Link>
            </div>
          </div>
          <div className="ml-2 flex w-[158px] flex-wrap content-start gap-x-[7px] gap-y-[7px]">
            <WinButton className="h-[42px] w-[75px]" lines={[["Закрыть", 43], ["все наборы", 59]]} />
            <WinButton className="h-[42px] w-[75px]" lines={[["Сбросить", 48], ["настройки", 53]]} />
            <WinButton className="h-[26px] w-[75px]" lines={[["Обновить", 49]]} />
            <WinButton className="h-[26px] w-[75px]" lines={[["Про версия", 58]]} />
          </div>
        </div>
      </div>
    </div>
  );
}

/* ---------- taskbar ---------- */

type TaskProps = { children: ReactNode; mark?: "dot" | "active" };

const Task = ({ children, mark }: TaskProps) => (
  <div className={clsx("relative mx-[2px] flex h-10 w-10 items-center justify-center rounded", mark === "active" && "bg-[#2b2b2b]")}>
    {children}
    {mark && (
      <span className={clsx("absolute bottom-px h-[3px] rounded-full bg-[#9a9a9a]", mark === "active" ? "w-4" : "w-[6px]")} />
    )}
  </div>
);

function TaskIcons() {
  return (
    <div className="flex items-center">
      <Task>
        <svg width="24" height="24" viewBox="0 0 24 24" fill="#3fc0f8">
          <path d="M0 0h11.500v11.500H0zM12.500 0H24v11.500H12.500z" fill="#5fd0fb" />
          <path d="M0 12.500h11.500V24H0zM12.500 12.500H24V24H12.500z" fill="#2aa9f3" />
        </svg>
      </Task>
      <Task mark="dot">
        <svg width="24" height="24" viewBox="0 0 24 24">
          <path d="M0 2.500Q0 1 1.500 1H8l2.500 3H22q2 0 2 2v5H0z" fill="#e0a21a" />
          <path d="M0 6.500h9L11.500 4.500H24V21q0 1.500-1.500 1.500h-21Q0 22.500 0 21z" fill="#fbcf4b" />
          <path d="M4.500 22.500V17q0-2 2-2h11q2 0 2 2v5.500z" fill="#1976c5" />
          <path d="M8 22.500v-3h8v3z" fill="#125a9c" />
        </svg>
      </Task>
      <Task>
        <svg width="24" height="24" viewBox="0 0 24 24">
          <path d="M1 3q0-2 2-2h14l6.500 11L17 23H3q-2 0-2-2z" fill="#f1f1f1" />
          <text x="3.500" y="20" textLength="11" lengthAdjust="spacingAndGlyphs" fill="#e01b1b" className="font-['Liberation_Serif',serif] text-[24px]">Я</text>
        </svg>
      </Task>
      <Task mark="active">
        <svg width="24" height="24" viewBox="0 0 24 24">
          <circle cx="12" cy="12" r="12" fill="#fbc116" />
          <path d="M12 12 6.800 15 1.610 6A12 12 0 0 0 12 24l5.200-9z" fill="#229b48" />
          <path d="M12 6h10.390A12 12 0 0 1 12 24l5.200-9z" fill="#fbc116" />
          <path d="M1.610 6 6.800 15 12 6h10.390A12 12 0 0 0 1.610 6z" fill="#e33b2e" />
          <circle cx="12" cy="12" r="6" fill="#fff" />
          <circle cx="12" cy="12" r="4.600" fill="#3b7ded" />
        </svg>
      </Task>
      <Task mark="dot">
        <svg width="24" height="24" viewBox="0 0 24 24">
          <circle cx="11" cy="12" r="11" fill="#2b9fd9" />
          <path d="M4 12 17 6.500l-2.500 12-4-3-2 2-.5-4z" fill="#fff" />
        </svg>
        <span className="absolute top-[8px] -right-[4px] h-[11px] w-[17px] rounded-sm bg-[#7d7d7d] text-center text-[9px] leading-[11px] text-white">474</span>
      </Task>
      <Task mark="dot">
        <svg width="24" height="24" viewBox="0 0 24 24">
          <rect width="24" height="24" rx="2" fill="#fb6a0a" />
          <path d="M4 4.500 9.500 6q3 .5 5-1l6.500-1.500q-.5 5-4.500 7.500-1.500 1.500-1 3l3.500 5h-4.500q-3-2.500-7 .5-2 1-4.500.5l4.500-4.500q2.500-1 4-2-4-.5-6-3.500z" fill="#fff" />
        </svg>
      </Task>
      <Task mark="dot">
        <svg width="24" height="24" viewBox="0 0 24 24">
          <circle cx="12" cy="12" r="12" fill="#fff" />
          <path d="m5.500 5.500 6.500 8.500v6.500" fill="none" stroke="#f8402c" strokeWidth="3.500" />
          <path d="m18.500 5.500-6.500 8.500" fill="none" stroke="#f6661c" strokeWidth="3.500" />
        </svg>
      </Task>
      <Task mark="dot">
        <svg width="24" height="24" viewBox="0 0 24 24">
          <path d="M6 1.500h16.500Q24 1.500 24 3v18q0 1.500-1.500 1.500H6z" fill="#c05fdc" />
          <path d="M19 1.500h5v7h-5z" fill="#d98bf0" />
          <path d="M19 8.500h5v7h-5z" fill="#9a3fc0" />
          <path d="M19 15.500h5v7h-5z" fill="#6a1d8f" />
          <rect y="6" width="12.500" height="12.500" rx="1" fill="#6b1f91" />
          <text x="2.200" y="16" fill="#fff" className="text-[10px] font-bold">N</text>
        </svg>
      </Task>
      <Task mark="dot">
        <svg width="24" height="24" viewBox="0 0 24 24">
          <path d="m12.500 0 6 6-6 6-6-6z" fill="#2f8be0" />
          <path d="M12 6.500h12v10H12z" fill="#2468c4" />
          <circle cx="12" cy="17" r="6.500" fill="#123f86" />
          <rect y="6" width="12.500" height="12.500" rx="1" fill="#195abd" />
          <text x="2.700" y="16" fill="#fff" className="text-[10px] font-bold">V</text>
        </svg>
      </Task>
      <Task mark="dot">
        <svg width="24" height="24" viewBox="0 0 24 24">
          <circle cx="12" cy="12" r="12" fill="#fff" />
          <path d="M2.500 5.500h19L12 22.500z" fill="#14274d" />
          <path d="M5.500 7.500h13L12 19z" fill="#24488a" />
          <path d="M10.500 9.500h3M12 9.500v4.500" stroke="#7c8a6a" />
        </svg>
      </Task>
    </div>
  );
}

function Taskbar() {
  return (
    <div className="relative flex h-[47px] items-center bg-[#1c1c1c] text-[#f4f4f4]">
      <svg width="26" height="28" viewBox="0 0 26 28" className="mb-[5px] ml-[20px]">
        <circle cx="12" cy="16" r="11" fill="#f5a623" />
        <path d="M10 24a3.500 3.500 0 0 1 1-6.500 4 4 0 0 1 7.500-.5A3.500 3.500 0 0 1 20 24z" fill="#cfe2fa" />
        <circle cx="18" cy="8" r="8" fill="#c42b1c" />
        <text x="15" y="12.500" fill="#fff" className="text-[12px]">1</text>
      </svg>
      <div className="mb-[2px] ml-[4px] leading-4">
        <Fit w={22}>11°C</Fit>
        <Fit w={90} className="text-[#cfcfcf]">В осн. солнечно</Fit>
      </div>
      <div className="absolute left-[740px]">
        <TaskIcons />
      </div>
      <svg width="11" height="7" viewBox="0 0 11 7" fill="none" stroke="#fff" className="ml-auto">
        <path d="M.5 6 5.500 1l5 5" strokeWidth="1.500" />
      </svg>
      <svg width="17" height="14" viewBox="0 0 17 14" className="ml-[18px]">
        <path d="M3.500 11.500a3.500 3.500 0 0 1 0-7 5 5 0 0 1 9-1.500 4 4 0 0 1 2 8.500z" fill="#b9b9b9" />
        <circle cx="12" cy="9" r="4.700" fill="#8a8a8a" stroke="#1c1c1c" strokeWidth=".6" />
        <path d="M10.700 7v4M13.300 7v4" stroke="#fff" />
      </svg>
      <Fit w={21} className="ml-[20px]">РУС</Fit>
      <svg width="17" height="17" viewBox="0 0 17 17" fill="none" stroke="#fff" className="ml-[18px]">
        <path d="M11 1.500H1q-.5 0-.5.500v9.500q0 .5.500.5h11.500M4 15.500h9M8.500 12v3.500M12.500.5h4v5h-4zM14.500 5.500v7q0 2-2 3M12.500 3h4" />
      </svg>
      <svg width="18" height="14" viewBox="0 0 18 14" fill="none" stroke="#fff" className="ml-[6px]">
        <path d="M.5 4.500v5H3L7.500 13V1L3 4.500z" />
        <path d="M10 5q1 2 0 4M12.500 3q2.500 4 0 8M15 1.500q3 5.500 0 11" stroke="#5a5a5a" />
      </svg>
      <div className="mr-[19px] mb-[2px] ml-[16px] flex flex-col items-end leading-4">
        <Fit w={28}>16:45</Fit>
        <Fit w={57}>28.09.2025</Fit>
      </div>
    </div>
  );
}

export default function App() {
  return (
    <div className="relative flex h-[1080px] w-[1920px] flex-col overflow-hidden bg-[#525252] font-['Open_Sans','Noto_Sans',sans-serif] text-[11.5px]">
      <TitleBar />
      <TabRow />
      <Ribbon />
      <main className="flex h-[797px]">
        <ShapesPanel />
        <div className="flex w-[1647px] flex-col border-l border-[#bdbdbd]">
          <TopRuler />
          <div className="flex h-[752px]">
            <LeftRuler />
            <div className="relative grow overflow-hidden">
              <Page />
              <SizePanel />
              <ExplorerPanel />
              <ShapeDataPanel />
            </div>
          </div>
          <SheetTabs />
        </div>
        <VerticalScroll />
      </main>
      <StatusBar />
      <Taskbar />
      <TimVisioWindow />
    </div>
  );
}
